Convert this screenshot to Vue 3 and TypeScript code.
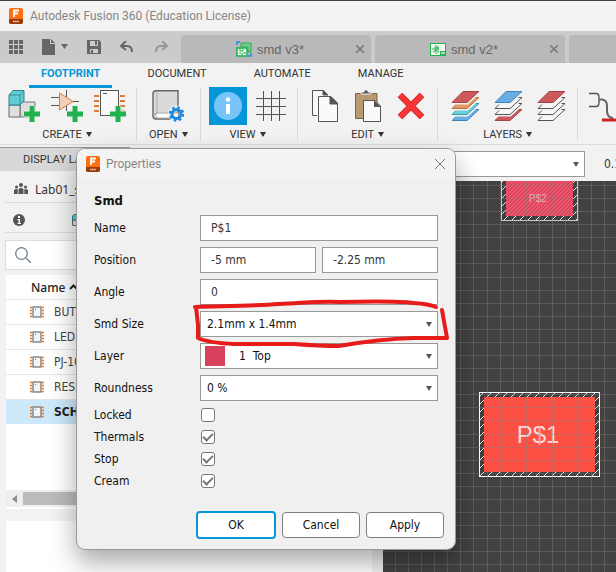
<script setup lang="ts">
import { ref } from 'vue'

interface DocTab { title: string; kind: 'board' | 'schematic' }

const docTabs: DocTab[] = [
  { title: 'smd v3*', kind: 'board' },
  { title: 'smd v2*', kind: 'schematic' },
]
const menus: string[] = ['FOOTPRINT', 'DOCUMENT', 'AUTOMATE', 'MANAGE']
const activeMenu = ref('FOOTPRINT')
const packages: string[] = ['BUTTON', 'LED5MM', 'PJ-102A', 'RESISTOR', 'SCHOTTKY']
const activePackage = ref('SCHOTTKY')

const name = ref('P$1')
const posX = ref('-5 mm')
const posY = ref('-2.25 mm')
const angle = ref('0')
const flags = ref([
  { id: 'locked', label: 'Locked', on: false },
  { id: 'thermals', label: 'Thermals', on: true },
  { id: 'stop', label: 'Stop', on: true },
  { id: 'cream', label: 'Cream', on: true },
])

// Sheet colours run from the bottom of each stack to its top.
const sheetSets: string[][] = [
  ['#68aee6', '#66cfd8', '#e69a62', '#cc5a5c'],
  ['#cc5a5c', '#f8f8f8', '#f8f8f8', '#68aee6'],
  ['#f8f8f8', '#f8f8f8', '#f8f8f8', '#cc5a5c'],
]
const outlines: Record<string, string> = {
  '#68aee6': '#4384b5',
  '#66cfd8': '#3b9ca4',
  '#e69a62': '#b0703f',
  '#cc5a5c': '#a54549',
  '#f8f8f8': '#555',
}
function sheetPath(i: number): string {
  const y = 19.5 - i * 6
  return `M14 ${y}H30L18 ${y + 11}H3Z`
}
const gridX = Array.from({ length: 40 }, (_, i) => Math.round(12 + i * 13.08) + 0.5)
const gridY = Array.from({ length: 40 }, (_, i) => Math.round(4 + i * 13.08) + 0.5)
</script>

<template>
  <div class="app">
    <header class="titlebar">
      <svg class="logo" viewBox="0 0 14 16"><rect width="14" height="16" rx="2" fill="#fd6f11" /><path d="M0 11H14V14Q14 16 12 16H2Q0 16 0 14Z" fill="#973a08" /><path d="M5 9V2.500H10M5 5.500H9" fill="none" stroke="#fff" stroke-width="1.800" /><path d="M4 13.500H10" stroke="#f3d3bd" stroke-width="1.500" stroke-dasharray="1.600 .5" /></svg>
      <span>Autodesk Fusion 360 (Education License)</span>
    </header>

    <div class="tabbar">
      <div class="quick">
        <button aria-label="Data panel"><svg width="14" height="14" viewBox="0 0 14 14" fill="#666"><path d="M0 0h4v4H0zM5 0h4v4H5zM10 0h4v4h-4zM0 5h4v4H0zM5 5h4v4H5zM10 5h4v4h-4zM0 10h4v4H0zM5 10h4v4H5zM10 10h4v4h-4z" /></svg></button>
        <button aria-label="File" class="file"><svg width="27" height="16" viewBox="0 0 27 16" fill="#666"><path d="M0 0H8V5H13V16H0ZM9 0L13 4H9Z" /><path d="M19 5H26L22.500 10Z" /></svg></button>
        <button aria-label="Save" class="save"><svg width="14" height="14" viewBox="0 0 14 14"><path d="M0 0H12L14 2V14H0Z" fill="#666" /><path d="M3 1H11V6H3ZM3 9H11V13H3Z" fill="#ccc" /><path d="M8 1H10V5H8ZM4 10H6V13H4Z" fill="#666" /></svg></button>
        <button aria-label="Undo" class="undo"><svg width="14" height="12" viewBox="0 0 14 12" fill="none" stroke="#666" stroke-width="2"><path d="M6 0L1 5L6 9M1 5H7Q12 5 12 11" /></svg></button>
        <button aria-label="Redo" class="redo"><svg width="14" height="12" viewBox="0 0 14 12" fill="none" stroke="#969696" stroke-width="2"><path d="M8 0L13 5L8 9M13 5H7Q2 5 2 11" /></svg></button>
      </div>
      <div v-for="t in docTabs" :key="t.title" class="tab">
        <svg v-if="t.kind === 'board'" width="16" height="16" viewBox="0 0 16 16" fill="none"><path d="M1 4V1H4M12 15H15V12" stroke="#1e8fe6" stroke-width="1.500" /><path d="M5 2H15V11H12V6H5Z" fill="#77c993" stroke="#22b14c" /><path d="M1 7H11V15H1Z" fill="#eef8f0" stroke="#22b14c" stroke-width="1.500" /><path d="M4 7V10H7V8M3 12H5M7 12H10M6 12V15" stroke="#22b14c" /></svg>
        <svg v-else width="16" height="13" viewBox="0 0 16 13" fill="none" stroke="#22b14c"><rect x=".5" y=".5" width="15" height="12" fill="#eef8f0" /><path d="M2 6H4M3 9L6 7M4 5H9M4 7H9M6 2V11M8 3V6M8 8V10" /><rect x="10.500" y="8.500" width="5" height="3" fill="#a9e0b9" /></svg>
        <span>{{ t.title }}</span>
        <button class="tabclose" :aria-label="'Close ' + t.title"><svg width="8" height="8" viewBox="0 0 8 8"><path d="M0 0L8 8M8 0L0 8" stroke="#7b7b7b" stroke-width="1.600" /></svg></button>
      </div>
      <div class="tab last"></div>
    </div>

    <nav class="menus">
      <button v-for="m in menus" :key="m" :class="{ active: m === activeMenu }" @click="activeMenu = m">{{ m }}</button>
    </nav>

    <div class="ribbon">
      <section class="group create">
        <div class="icons">
          <svg width="32" height="32" viewBox="0 0 32 32"><path d="M12 15L15 12H27V27H12Z" fill="#dedede" stroke="#777" /><path d="M1 15H12V27H1Z" fill="#e0e0e0" stroke="#666" /><path d="M1 5L5 .5H16V11L12 15H1Z" fill="#63cbd4" stroke="#27838b" /><path d="M1 5H12V15M12 5L16 1" fill="none" stroke="#398f98" /><path class="halo" d="M24 16V32M16 24H32" /><path class="plus" d="M24 16V32M16 24H32" /></svg>
          <svg width="32" height="32" viewBox="0 0 32 32"><path d="M0 7.500H8M0 15.500H8M15.500 0V9M15.500 14V21M22 11.500H28" stroke="#555" /><path d="M8.500 3L22 11.500L8.500 20Z" fill="#f1cfb8" stroke="#df7c35" /><path class="halo" d="M24 16V32M16 24H32" /><path class="plus" d="M24 16V32M16 24H32" /></svg>
          <svg width="32" height="32" viewBox="0 0 32 32"><path d="M0 6H5M0 11H5M0 16H5M0 21H5M26 6H31M26 11H31M26 16H31M26 21H31" stroke="#e07b32" stroke-width="2" /><rect x="6.500" y=".5" width="18" height="25" fill="#fafafa" stroke="#555" /><path d="M9 3.500H13" stroke="#555" /><path class="halo" d="M24 16V32M16 24H32" /><path class="plus" d="M24 16V32M16 24H32" /></svg>
        </div>
        <button class="caption">CREATE<i></i></button>
      </section>
      <section class="group open">
        <div class="icons">
          <svg width="32" height="32" viewBox="0 0 32 32"><path d="M4 .7H26V29H4Q1 29 1 26V3Q1 1 4 .7Z" fill="#dadada" stroke="#666" stroke-width="1.400" /><path d="M5 1V23Q2 23 1.500 26" fill="none" stroke="#aaa" /><path d="M26 23H5Q2 25 5 28H26" fill="#fff" stroke="#aaa" /><circle cx="24.500" cy="24" r="7" fill="none" stroke="#f2f2f2" stroke-width="3" /><circle cx="24.500" cy="24" r="4.500" fill="none" stroke="#1e88e5" stroke-width="3" /><circle cx="24.500" cy="24" r="6.500" fill="none" stroke="#1e88e5" stroke-width="2.500" stroke-dasharray="2.550 2.550" /></svg>
        </div>
        <button class="caption">OPEN<i></i></button>
      </section>
      <section class="group view">
        <div class="icons">
          <svg class="info" width="38" height="38" viewBox="0 0 38 38"><rect width="38" height="38" fill="#0696d7" /><circle cx="19" cy="19" r="14" fill="#77c4fb" /><circle cx="19" cy="12.500" r="2.200" fill="#fff" /><path d="M17 17H21V27H17Z" fill="#fff" /></svg>
          <svg width="32" height="32" viewBox="0 0 32 32"><path d="M1 8.500H31M1 16.500H31M1 24.500H31M8.500 1V31M16.500 1V31M24.500 1V31" stroke="#555" /></svg>
        </div>
        <button class="caption">VIEW<i></i></button>
      </section>
      <section class="group edit">
        <div class="icons">
          <svg width="32" height="32" viewBox="0 0 32 32" fill="#fafafa" stroke="#555"><path d="M8 25.500H3.500V.5H14L19 5" /><path d="M14 0V5H19Z" fill="#555" /><path d="M9.500 6.500H22L28.500 13V31.500H9.500Z" /><path d="M21 6V14H29Z" fill="#555" /></svg>
          <svg width="32" height="32" viewBox="0 0 32 32"><path d="M3.500 3.500H25V28.500H3.500Z" fill="#b89a72" stroke="#7b6547" /><path d="M9 4V2H12V0H16V2H19V4Z" fill="#555" stroke="#f2f2f2" /><path d="M11.500 10.500H23L28.500 16V31.500H11.500Z" fill="#fafafa" stroke="#555" /><path d="M22 10V17H29Z" fill="#555" /></svg>
          <svg width="32" height="32" viewBox="0 0 32 32"><path d="M5 5L27 27M27 5L5 27" stroke="#c52528" stroke-width="6.500" /><path d="M5 5L27 27M27 5L5 27" stroke="#fa3535" stroke-width="5" /></svg>
        </div>
        <button class="caption">EDIT<i></i></button>
      </section>
      <section class="group layers">
        <div class="icons">
          <svg v-for="(set, n) in sheetSets" :key="n" width="32" height="32" viewBox="0 0 32 32">
            <g v-for="(c, i) in set" :key="i"><path :d="sheetPath(i)" stroke="#f2f2f2" stroke-width="4" /><path :d="sheetPath(i)" :fill="c" :stroke="outlines[c]" /></g>
          </svg>
        </div>
        <button class="caption">LAYERS<i></i></button>
      </section>
      <section class="group route">
        <svg width="28" height="32" viewBox="0 0 28 32" fill="none"><path d="M0 3.500H7Q10 3.500 10 7V13Q10 16.500 7 16.500H0" stroke="#555" stroke-width="1.400" /><path d="M10 9.500H13Q18 10 18 16V22Q19 28 24 28" stroke="#666" stroke-width="2" /><path d="M13 30H28" stroke="#d02323" stroke-width="3" /></svg>
      </section>
    </div>

    <main class="work">
      <aside class="side">
        <div class="sidetab">DISPLAY LAYERS</div>
        <div class="project"><svg width="14" height="12" viewBox="0 0 14 12" fill="#555"><circle cx="7" cy="2" r="2" /><circle cx="2.500" cy="4" r="1.500" /><circle cx="11.500" cy="4" r="1.500" /><path d="M4.500 11V6Q7 4 9.500 6V11ZM0 11V7Q2 5.500 3.700 6.500V11ZM14 11V7Q12 5.500 10.300 6.500V11Z" /></svg>Lab01_smd</div>
        <div class="filter">
          <svg width="12" height="12" viewBox="0 0 12 12"><circle cx="6" cy="6" r="6" fill="#555" /><path d="M5 2H7V4H5ZM4.500 5H7V9H8V10H4.500V9H5.500V6H4.500Z" fill="#fff" /></svg>
          <svg width="14" height="12" viewBox="0 0 14 12"><path d="M.5 6H6V11.500H.5Z" fill="#ddd" stroke="#666" /><path d="M.5 2L2 .5H9V6H.5Z" fill="#63cbd4" stroke="#27838b" /></svg>
        </div>
        <label class="search"><svg width="16" height="16" viewBox="0 0 16 16" fill="none" stroke="#6f7e8c" stroke-width="1.300"><circle cx="6.500" cy="6.500" r="5.800" /><path d="M11 11L16 16" /></svg><input type="text" aria-label="Search" /></label>
        <div class="list">
          <div class="listhead">Name<svg width="9" height="6" viewBox="0 0 9 6"><path d="M1 5L4.500 1.500L8 5" fill="none" stroke="#222" stroke-width="2" /></svg></div>
          <button v-for="p in packages" :key="p" class="item" :class="{ chosen: p === activePackage }" @click="activePackage = p">
            <svg width="14" height="12" viewBox="0 0 14 12"><path d="M0 1.500H2M0 4.500H2M0 7.500H2M0 10.500H2M12 1.500H14M12 4.500H14M12 7.500H14M12 10.500H14" stroke="#e07b32" stroke-width="1.500" /><rect x="3" y="1" width="8" height="10" fill="#f4f4f4" stroke="#777" stroke-width="1.300" /><path d="M5 3.500H6" stroke="#777" /></svg>{{ p }}
          </button>
          <div class="scroll"><svg width="5" height="8" viewBox="0 0 5 8"><path d="M5 0V8L0 4Z" fill="#8c8c8c" /></svg><span></span></div>
        </div>
        <div class="preview"></div>
      </aside>

      <div class="editor">
        <div class="options">
          <span class="combo"><select aria-label="Size preset"><option></option></select></span>
          <span class="value">0.1</span>
        </div>
        <svg class="canvas" width="100%" height="100%">
          <defs>
            <pattern id="hatch" width="8" height="8" patternUnits="userSpaceOnUse"><path d="M-2 2L2 -2M0 8L8 0M6 10L10 6" stroke="#e8e8e8" /></pattern>
            <pattern id="fine" width="4" height="4" patternUnits="userSpaceOnUse"><path d="M-1 1L1 -1M0 4L4 0M3 5L5 3" stroke="#d5415c" stroke-width="1.300" /></pattern>
          </defs>
          <rect width="100%" height="100%" fill="#424242" />
          <g>
            <rect x="118.500" y="-60" width="76" height="99.500" fill="#404040" />
            <rect x="118.500" y="-60" width="76" height="99.500" fill="url(#hatch)" stroke="#c8c8c8" />
            <rect x="123" y="-60" width="67" height="95" fill="#f4586c" />
            <rect x="123" y="-60" width="67" height="95" fill="url(#fine)" />
            <text x="155" y="21" class="pad small">P$2</text>
          </g>
          <g>
            <rect x="96.500" y="211.500" width="120" height="84" fill="#404040" />
            <rect x="96.500" y="211.500" width="120" height="84" fill="url(#hatch)" stroke="#fff" />
            <rect x="101" y="216" width="111" height="75" fill="#ff5046" />
            <text x="155" y="262" class="pad">P$1</text>
          </g>
          <g stroke="#808080" stroke-opacity=".4">
            <line v-for="x in gridX" :key="'x' + x" :x1="x" y1="0" :x2="x" y2="100%" />
            <line v-for="y in gridY" :key="'y' + y" x1="0" :y1="y" x2="100%" :y2="y" />
          </g>
        </svg>
      </div>
    </main>

    <form class="dialog" role="dialog" aria-label="Properties" @submit.prevent>
      <div class="dlghead">
        <svg class="logo" viewBox="0 0 14 16"><rect width="14" height="16" rx="2" fill="#fd6f11" /><path d="M0 11H14V14Q14 16 12 16H2Q0 16 0 14Z" fill="#973a08" /><path d="M5 9V2.500H10M5 5.500H9" fill="none" stroke="#fff" stroke-width="1.800" /><path d="M4 13.500H10" stroke="#f3d3bd" stroke-width="1.500" stroke-dasharray="1.600 .5" /></svg>
        <span>Properties</span>
        <button type="button" aria-label="Close"><svg width="10" height="10" viewBox="0 0 10 10"><path d="M0 0L10 10M10 0L0 10" stroke="#777" /></svg></button>
      </div>
      <div class="fields">
        <h2>Smd</h2>
        <div class="row"><label for="f-name">Name</label><input id="f-name" v-model="name" type="text" /></div>
        <div class="row"><label for="f-x">Position</label><div class="pair"><input id="f-x" v-model="posX" type="text" /><input v-model="posY" type="text" aria-label="Position Y" /></div></div>
        <div class="row"><label for="f-angle">Angle</label><input id="f-angle" v-model="angle" type="text" /></div>
        <div class="row"><label for="f-size">Smd Size</label><span class="combo"><select id="f-size"><option>2.1mm x 1.4mm</option></select></span></div>
        <div class="row"><label for="f-layer">Layer</label><span class="combo"><b class="swatch"></b><select id="f-layer" class="layer"><option>1&nbsp; Top</option></select></span></div>
        <div class="row"><label for="f-round">Roundness</label><span class="combo"><select id="f-round"><option>0 %</option></select></span></div>
        <div class="checks">
          <div v-for="f in flags" :key="f.id" class="check"><label :for="f.id">{{ f.label }}</label><input :id="f.id" v-model="f.on" type="checkbox" /></div>
        </div>
      </div>
      <div class="actions">
        <button type="submit" class="ok">OK</button>
        <button type="button">Cancel</button>
        <button type="button">Apply</button>
      </div>
      <svg class="marker" width="260" height="60" viewBox="0 0 260 60"><path d="M7 12L9 30V43Q20 48 45 49H105Q130 51 150 51Q190 44 225 43L258 43L253 15M6 12C40 11 65 11 90 9C115 8 130 6 150 7C190 6 210 6 225 8Q240 9 247 12" /></svg>
    </form>
  </div>
</template>

<style>
body { margin: 0; overflow: hidden; background: #413d40; }
</style>

<style scoped>
* { box-sizing: border-box; }
svg { display: block; flex: none; }
button { border: 0; padding: 0; background: none; font: inherit; color: inherit; }
.app { position: relative; display: flex; flex-direction: column; height: 100vh; overflow: hidden; background: #f2f2f2; border-top: 1px solid #413d40; font-family: Roboto, "Liberation Sans", sans-serif; font-size: 12px; color: #333; }
.logo { width: 14px; height: 16px; }
.titlebar { display: flex; align-items: center; gap: 7px; height: 30px; padding-left: 9px; background: #f3f3f3; color: #868686; }
.tabbar { display: flex; gap: 4px; height: 32px; padding-top: 4px; background: #cbcbcb; }
.quick { display: flex; align-items: center; width: 177px; padding-left: 9px; padding-bottom: 4px; }
.file { margin-left: 19px; }
.save { margin-left: 18px; }
.undo { margin-left: 19px; }
.redo { margin-left: 20px; }
.tab { display: flex; align-items: center; gap: 5px; width: 190px; padding: 0 7px 0 55px; background: #b9b9b9; border-radius: 4px 4px 0 0; color: #666; font-family: "Liberation Sans", sans-serif; font-size: 13px; }
.tab.last { flex: 1; padding: 0; border-radius: 4px 0 0 0; }
.tabclose { margin-left: auto; }
.menus { display: flex; gap: 23px; height: 25px; padding-left: 29px; }
.menus button { padding: 0 12px; border-bottom: 3px solid transparent; font-size: 11px; line-height: 22px; }
.menus .active { border-color: #0696d7; color: #0696d7; font-weight: 700; }
.ribbon { display: flex; height: 57px; border-bottom: 1px solid #dcdcdc; }
.group { display: flex; flex-direction: column; align-items: center; gap: 6px; height: 53px; padding: 0 10px 0 11px; border-left: 1px solid #dcdcdc; }
.group.create { border-left: 0; padding-left: 8px; }
.group.open { padding: 0 12px; }
.group.view { padding: 0 10px 0 8px; }
.group.route { padding: 2px 0 0 11px; }
.icons { display: flex; gap: 11px; height: 32px; margin-top: 2px; }
.view .icons { gap: 8px; }
.info { margin-top: -3px; }
.halo { stroke: #f2f2f2; stroke-width: 7; }
.plus { stroke: #22b14c; stroke-width: 5; }
.caption { display: flex; align-items: flex-start; gap: 4px; font-size: 11px; line-height: 14px; }
.caption i { margin-top: 4px; border: 3px solid transparent; border-top: 5px solid #333; border-bottom: 0; }
.work { display: flex; flex: 1; min-height: 0; padding-top: 2px; }
.side { display: flex; flex-direction: column; width: 383px; padding: 0 11px 0 5px; background: #f2f2f2; font-family: "Noto Sans", sans-serif; }
.sidetab { width: 130px; height: 24px; margin-left: -5px; padding-left: 23px; border-top: 1px solid #999; background: #d8d8d8; font-family: Roboto, sans-serif; font-size: 11px; line-height: 24px; white-space: nowrap; }
.project { display: flex; align-items: center; gap: 7px; height: 32px; padding: 5px 0 0 9px; border-bottom: 1px solid #dcdcdc; font-size: 12px; }
.filter { display: flex; align-items: center; gap: 47px; height: 30px; padding: 5px 0 0 8px; border-bottom: 1px solid #dcdcdc; }
.search { display: flex; align-items: center; gap: 6px; height: 30px; margin-top: 7px; padding-left: 9px; border: 1px solid #ddd; background: #fff; }
.search input { flex: 1; border: 0; outline: 0; background: none; }
.list { display: flex; flex-direction: column; height: 234px; margin: 5px 0 0 1px; background: #fff; }
.listhead { display: flex; align-items: center; gap: 4px; height: 24px; padding-left: 25px; font-size: 12px; font-weight: 500; color: #222; }
.item { display: flex; align-items: center; gap: 10px; height: 25px; padding-left: 24px; border-top: 1px solid #e2e7ea; color: #444; font-family: "DejaVu Sans Condensed", "DejaVu Sans", sans-serif; font-size: 12px; }
.item.chosen { background: #cde9f9; font-weight: 700; color: #222; }
.scroll { display: flex; align-items: center; gap: 6px; height: 17px; margin-top: auto; margin-bottom: 2px; padding-left: 6px; background: #efefef; }
.scroll span { width: 200px; height: 13px; background: #bbb; }
.preview { flex: 1; margin: 12px 0 0 1px; background: #fff; }
.editor { display: flex; flex: 1; flex-direction: column; min-width: 0; }
.options { display: flex; align-items: center; gap: 19px; height: 34px; font-family: "DejaVu Sans Condensed", "DejaVu Sans", sans-serif; overflow: hidden; }
.options .combo { flex: none; width: 202px; }
.canvas { flex: 1; min-height: 0; }
.pad { fill: #ffdcd8; font-family: "Liberation Sans", sans-serif; font-size: 24px; text-anchor: middle; }
.pad.small { fill: #e0b3b8; font-size: 10px; }
.dialog { position: absolute; left: 76px; top: 147px; width: 380px; border: 1px solid #999; border-radius: 9px; background: #f0f0f0; box-shadow: 0 12px 26px rgba(0, 0, 0, .34); color: #111; font-family: "DejaVu Sans Condensed", "DejaVu Sans", sans-serif; font-size: 12px; }
.dlghead { display: flex; align-items: center; gap: 6px; height: 29px; padding: 0 10px 0 9px; border-radius: 8px 8px 0 0; background: #f3f3f3; color: #868686; font-family: Roboto, sans-serif; }
.dlghead button { margin-left: auto; }
.fields { display: flex; flex-direction: column; gap: 6px; padding: 15px 17px 0; }
h2 { margin: 0; height: 16px; font-size: 13px; line-height: 16px; }
.row { display: grid; grid-template-columns: 106px 1fr; align-items: center; height: 26px; }
.pair { display: grid; grid-template-columns: 1fr 1fr; gap: 6px; }
.row input { width: 100%; min-width: 0; height: 26px; padding: 0 10px; border: 1px solid #999; border-radius: 0; outline: 0; background: #fff; color: #333; font: inherit; }
.combo { display: flex; position: relative; align-items: center; height: 26px; border: 1px solid #999; background: #fff; }
.combo::after { content: ""; position: absolute; right: 5px; top: 10px; border: 3px solid transparent; border-top: 5px solid #555; border-bottom: 0; pointer-events: none; }
.combo select { flex: 1; min-width: 0; height: 24px; padding: 0 6px; border: 0; outline: 0; appearance: none; background: none; color: #111; font: inherit; }
.combo .layer { padding-left: 14px; }
.swatch { width: 20px; height: 20px; margin-left: 4px; background: #d9425c; }
.checks { display: flex; flex-direction: column; margin-top: -3px; }
.check { display: grid; grid-template-columns: 107px auto; justify-content: start; align-items: center; height: 22px; }
.check input { display: grid; place-items: center; width: 14px; height: 14px; margin: 0; border: 1px solid #777; border-radius: 3px; appearance: none; background: #fff; }
.check input:checked::after { content: ""; width: 8px; height: 4px; margin-top: -3px; border: solid #777; border-width: 0 0 2px 2px; transform: rotate(-45deg); }
.actions { display: flex; justify-content: flex-end; align-items: center; gap: 6px; padding: 19px 11px 10px; }
.actions button { width: 78px; height: 26px; border: 1px solid #808080; border-radius: 4px; background: #fff; color: #111; }
.actions .ok { width: 80px; height: 28px; border: 2px solid #0696d7; }
.marker { position: absolute; left: 112px; top: 146px; overflow: visible; pointer-events: none; }
.marker path { fill: none; stroke: #e81b1b; stroke-width: 4; stroke-linecap: round; stroke-linejoin: round; }
</style>
